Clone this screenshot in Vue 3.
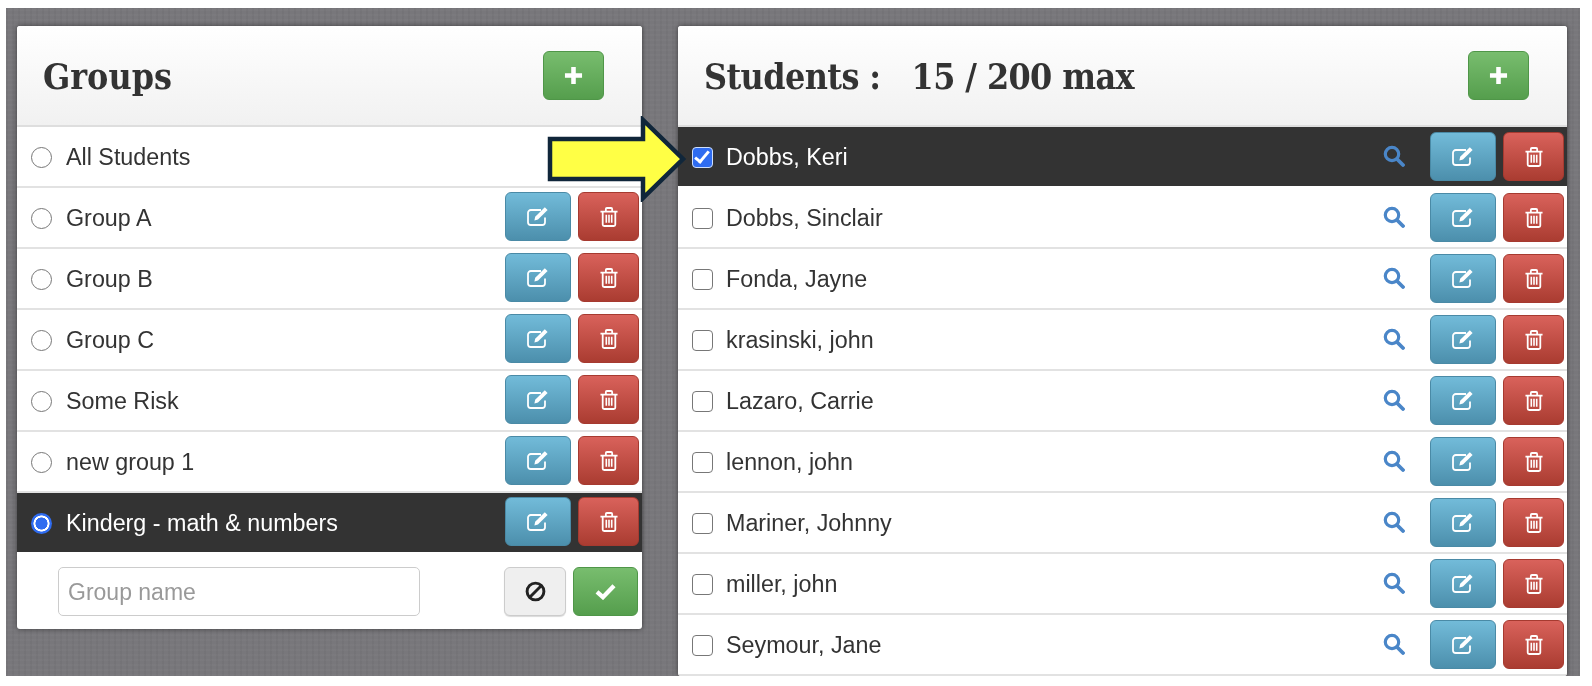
<script setup>
const groups = [
  { name: 'All Students', actions: false },
  { name: 'Group A', actions: true },
  { name: 'Group B', actions: true },
  { name: 'Group C', actions: true },
  { name: 'Some Risk', actions: true },
  { name: 'new group 1', actions: true },
  { name: 'Kinderg - math & numbers', actions: true, active: true }
]
const students = [
  { name: 'Dobbs, Keri', active: true },
  { name: 'Dobbs, Sinclair' },
  { name: 'Fonda, Jayne' },
  { name: 'krasinski, john' },
  { name: 'Lazaro, Carrie' },
  { name: 'lennon, john' },
  { name: 'Mariner, Johnny' },
  { name: 'miller, john' },
  { name: 'Seymour, Jane' }
]
</script>

<template>
  <div class="page">
    <section class="panel left">
      <header class="head">
        <h2>Groups</h2>
        <button class="btn green add" type="button">
          <svg viewBox="0 0 20 20" width="19" height="19"><path d="M10 1v18M1 10h18" stroke="#fff" stroke-width="4.800" fill="none" /></svg>
        </button>
      </header>
      <div v-for="g in groups" :key="g.name" class="row" :class="{ active: g.active }">
        <input class="radio" type="radio" name="group" :checked="g.active" />
        <span class="label">{{ g.name }}</span>
        <div v-if="g.actions" class="actions">
          <button class="btn blue edit" type="button">
            <svg class="edit-icon" viewBox="0 0 24 20" width="24" height="20" fill="none" stroke="#fff"><path d="M18 11.500v4.700a2.800 2.800 0 0 1-2.800 2.800H3.800A2.800 2.800 0 0 1 1 16.200V6.800A2.800 2.800 0 0 1 3.800 4h10.200" stroke-width="1.800" /><path d="M7.400 14.400l.8-3.600L17.800 1.200l2.800 2.800-9.600 9.600z" fill="#fff" stroke="none" /></svg>
          </button>
          <button class="btn red trash" type="button">
            <svg viewBox="0 0 20 24" width="18" height="22" fill="none" stroke="#fff" stroke-width="2"><path d="M.5 6h19M6.500 6V3.200C6.500 2.500 7 2 7.700 2h4.600c.7 0 1.200.5 1.200 1.200V6M3 6v14.300C3 21.300 3.700 22 4.700 22h10.600c1 0 1.700-.7 1.700-1.700V6" /><path d="M7 9.500v9M10 9.500v9M13 9.500v9" stroke-width="1.800" /></svg>
          </button>
        </div>
      </div>
      <form class="new-group" @submit.prevent>
        <input class="name-input" type="text" placeholder="Group name" />
        <div class="new-actions">
          <button class="btn gray cancel" type="button">
            <svg viewBox="0 0 20 20" width="21" height="21" fill="none" stroke="#222" stroke-width="2.800"><circle cx="10" cy="10" r="8" /><path d="M4.300 15.700L15.700 4.300" /></svg>
          </button>
          <button class="btn green confirm" type="button">
            <svg viewBox="0 0 22 18" width="21" height="17" fill="none" stroke="#fff" stroke-width="4.600"><path d="M2 9.500l6.300 5.500L20 3" /></svg>
          </button>
        </div>
      </form>
    </section>

    <section class="panel right">
      <header class="head">
        <h2>Students :<span class="count">15 / 200 max</span></h2>
        <button class="btn green add" type="button">
          <svg viewBox="0 0 20 20" width="19" height="19"><path d="M10 1v18M1 10h18" stroke="#fff" stroke-width="4.800" fill="none" /></svg>
        </button>
      </header>
      <div v-for="s in students" :key="s.name" class="row" :class="{ active: s.active }">
        <input class="check" type="checkbox" :checked="s.active" />
        <span class="label">{{ s.name }}</span>
        <svg class="search" viewBox="0 0 22 22" width="22" height="22" fill="none" stroke="#4a86c8"><circle cx="9" cy="9" r="6.700" stroke-width="3.200" /><path d="M14 14l6 6" stroke-width="3.800" stroke-linecap="round" /></svg>
        <div class="actions">
          <button class="btn blue edit" type="button">
            <svg class="edit-icon" viewBox="0 0 24 20" width="24" height="20" fill="none" stroke="#fff"><path d="M18 11.500v4.700a2.800 2.800 0 0 1-2.800 2.800H3.800A2.800 2.800 0 0 1 1 16.200V6.800A2.800 2.800 0 0 1 3.800 4h10.200" stroke-width="1.800" /><path d="M7.400 14.400l.8-3.600L17.800 1.200l2.800 2.800-9.600 9.600z" fill="#fff" stroke="none" /></svg>
          </button>
          <button class="btn red trash" type="button">
            <svg viewBox="0 0 20 24" width="18" height="22" fill="none" stroke="#fff" stroke-width="2"><path d="M.5 6h19M6.500 6V3.200C6.500 2.500 7 2 7.700 2h4.600c.7 0 1.200.5 1.200 1.200V6M3 6v14.300C3 21.300 3.700 22 4.700 22h10.600c1 0 1.700-.7 1.700-1.700V6" /><path d="M7 9.500v9M10 9.500v9M13 9.500v9" stroke-width="1.800" /></svg>
          </button>
        </div>
      </div>
    </section>

    <svg class="arrow" viewBox="0 0 140 86" width="140" height="86">
      <path d="M3 23H96V4L136 43 96 82V63H3z" fill="#ffff45" stroke="#10263a" stroke-width="4.500" />
    </svg>
  </div>
</template>

<style>
html, body { margin: 0; background: #fff; }
</style>

<style scoped>
.page {
  position: relative;
  box-sizing: border-box;
  display: flex;
  align-items: flex-start;
  gap: 36px;
  margin: 8px 12px 0 6px;
  height: 668px;
  padding: 18px 0 0 11px;
  overflow: hidden;
  font-family: "Liberation Sans", Arial, sans-serif;
  filter: blur(.3px);
  background-color: #78777b;
  background-image:
    repeating-linear-gradient(0deg, rgba(255,255,255,.02) 0 2px, transparent 2px 5px),
    repeating-linear-gradient(90deg, rgba(0,0,0,.03) 0 2px, transparent 2px 6px);
}
.panel {
  flex: none;
  background: #fff;
  border-radius: 3px;
  box-shadow: 0 0 5px rgba(0,0,0,.5);
  overflow: hidden;
}
.left { width: 625px; }
.right { width: 889px; }
.head {
  box-sizing: border-box;
  display: flex;
  align-items: center;
  justify-content: space-between;
  height: 101px;
  padding: 0 38px 0 26px;
  background: linear-gradient(#fff, #f1f1f1);
  border-bottom: 2px solid #dedede;
}
h2 {
  margin: 2px 0 0;
  font-family: "DejaVu Serif", serif;
  font-stretch: condensed;
  font-weight: 700;
  font-size: 35.500px;
  color: #333;
}
.right h2 { letter-spacing: -.6px; }
.count { margin-left: 31px; }
.row {
  box-sizing: border-box;
  display: flex;
  align-items: center;
  height: 61px;
  padding: 0 3px 0 14px;
  border-bottom: 2px solid #e2e2e2;
  color: #333;
  font-size: 23.300px;
}
.row.active { background: #333; color: #fff; border-bottom-color: #fff; }
.label { margin-left: 13px; flex: 1; padding-top: 2px; }
.left .label { margin-left: 14px; }
.left .actions { margin-bottom: 2px; }
.actions { display: flex; gap: 7px; }
.radio, .check {
  appearance: none;
  flex: none;
  box-sizing: border-box;
  width: 21px;
  height: 21px;
  margin: 1px 0 0;
  background: #fff;
  border: 1.500px solid #777;
}
.radio { border-radius: 50%; }
.check { border-radius: 4px; position: relative; }
.radio:checked {
  border: none;
  background: radial-gradient(circle, #2f6cf0 0 5.800px, #fff 6.300px 7.800px, #2f6cf0 8.300px);
}
.check:checked { background: #2f6cf0; border: 1.500px solid #cfdffb; }
.check:checked::after {
  content: "";
  position: absolute;
  left: 5px;
  top: 0.500px;
  width: 5px;
  height: 12px;
  border: solid #fff;
  border-width: 0 3px 3px 0;
  transform: rotate(40deg);
}
.search { flex: none; margin-right: 25px; margin-bottom: 2px; }
.edit-icon { margin-top: -2px; margin-left: 1px; }
.btn {
  box-sizing: border-box;
  display: flex;
  align-items: center;
  justify-content: center;
  height: 49px;
  padding: 0;
  border-radius: 6px;
}
.blue { background: linear-gradient(#72bbd9, #4c8fac); border: 1px solid #4a8aa6; }
.red { background: linear-gradient(#d9625b, #aa3c31); border: 1px solid #a63a30; }
.green { background: linear-gradient(#78bd6e, #559e4d); border: 1px solid #4f9648; }
.gray { background: #efefef; border: 1px solid #ccc; box-shadow: 0 1px 1px rgba(0,0,0,.15); }
.add { width: 61px; }
.edit { width: 66px; }
.trash { width: 61px; }
.new-group {
  box-sizing: border-box;
  display: flex;
  align-items: center;
  justify-content: space-between;
  height: 75px;
  padding: 0 4px 0 41px;
}
.name-input {
  box-sizing: border-box;
  width: 362px;
  height: 49px;
  padding: 2px 9px 0;
  border: 1.500px solid #ccc;
  border-radius: 5px;
  font: 23px "Liberation Sans", Arial, sans-serif;
  background: #fff;
  outline: none;
}
.name-input::placeholder { color: #999; }
.new-actions { display: flex; gap: 7px; }
.cancel { width: 62px; }
.confirm { width: 65px; }
.arrow { position: absolute; left: 541px; top: 108px; }
</style>
